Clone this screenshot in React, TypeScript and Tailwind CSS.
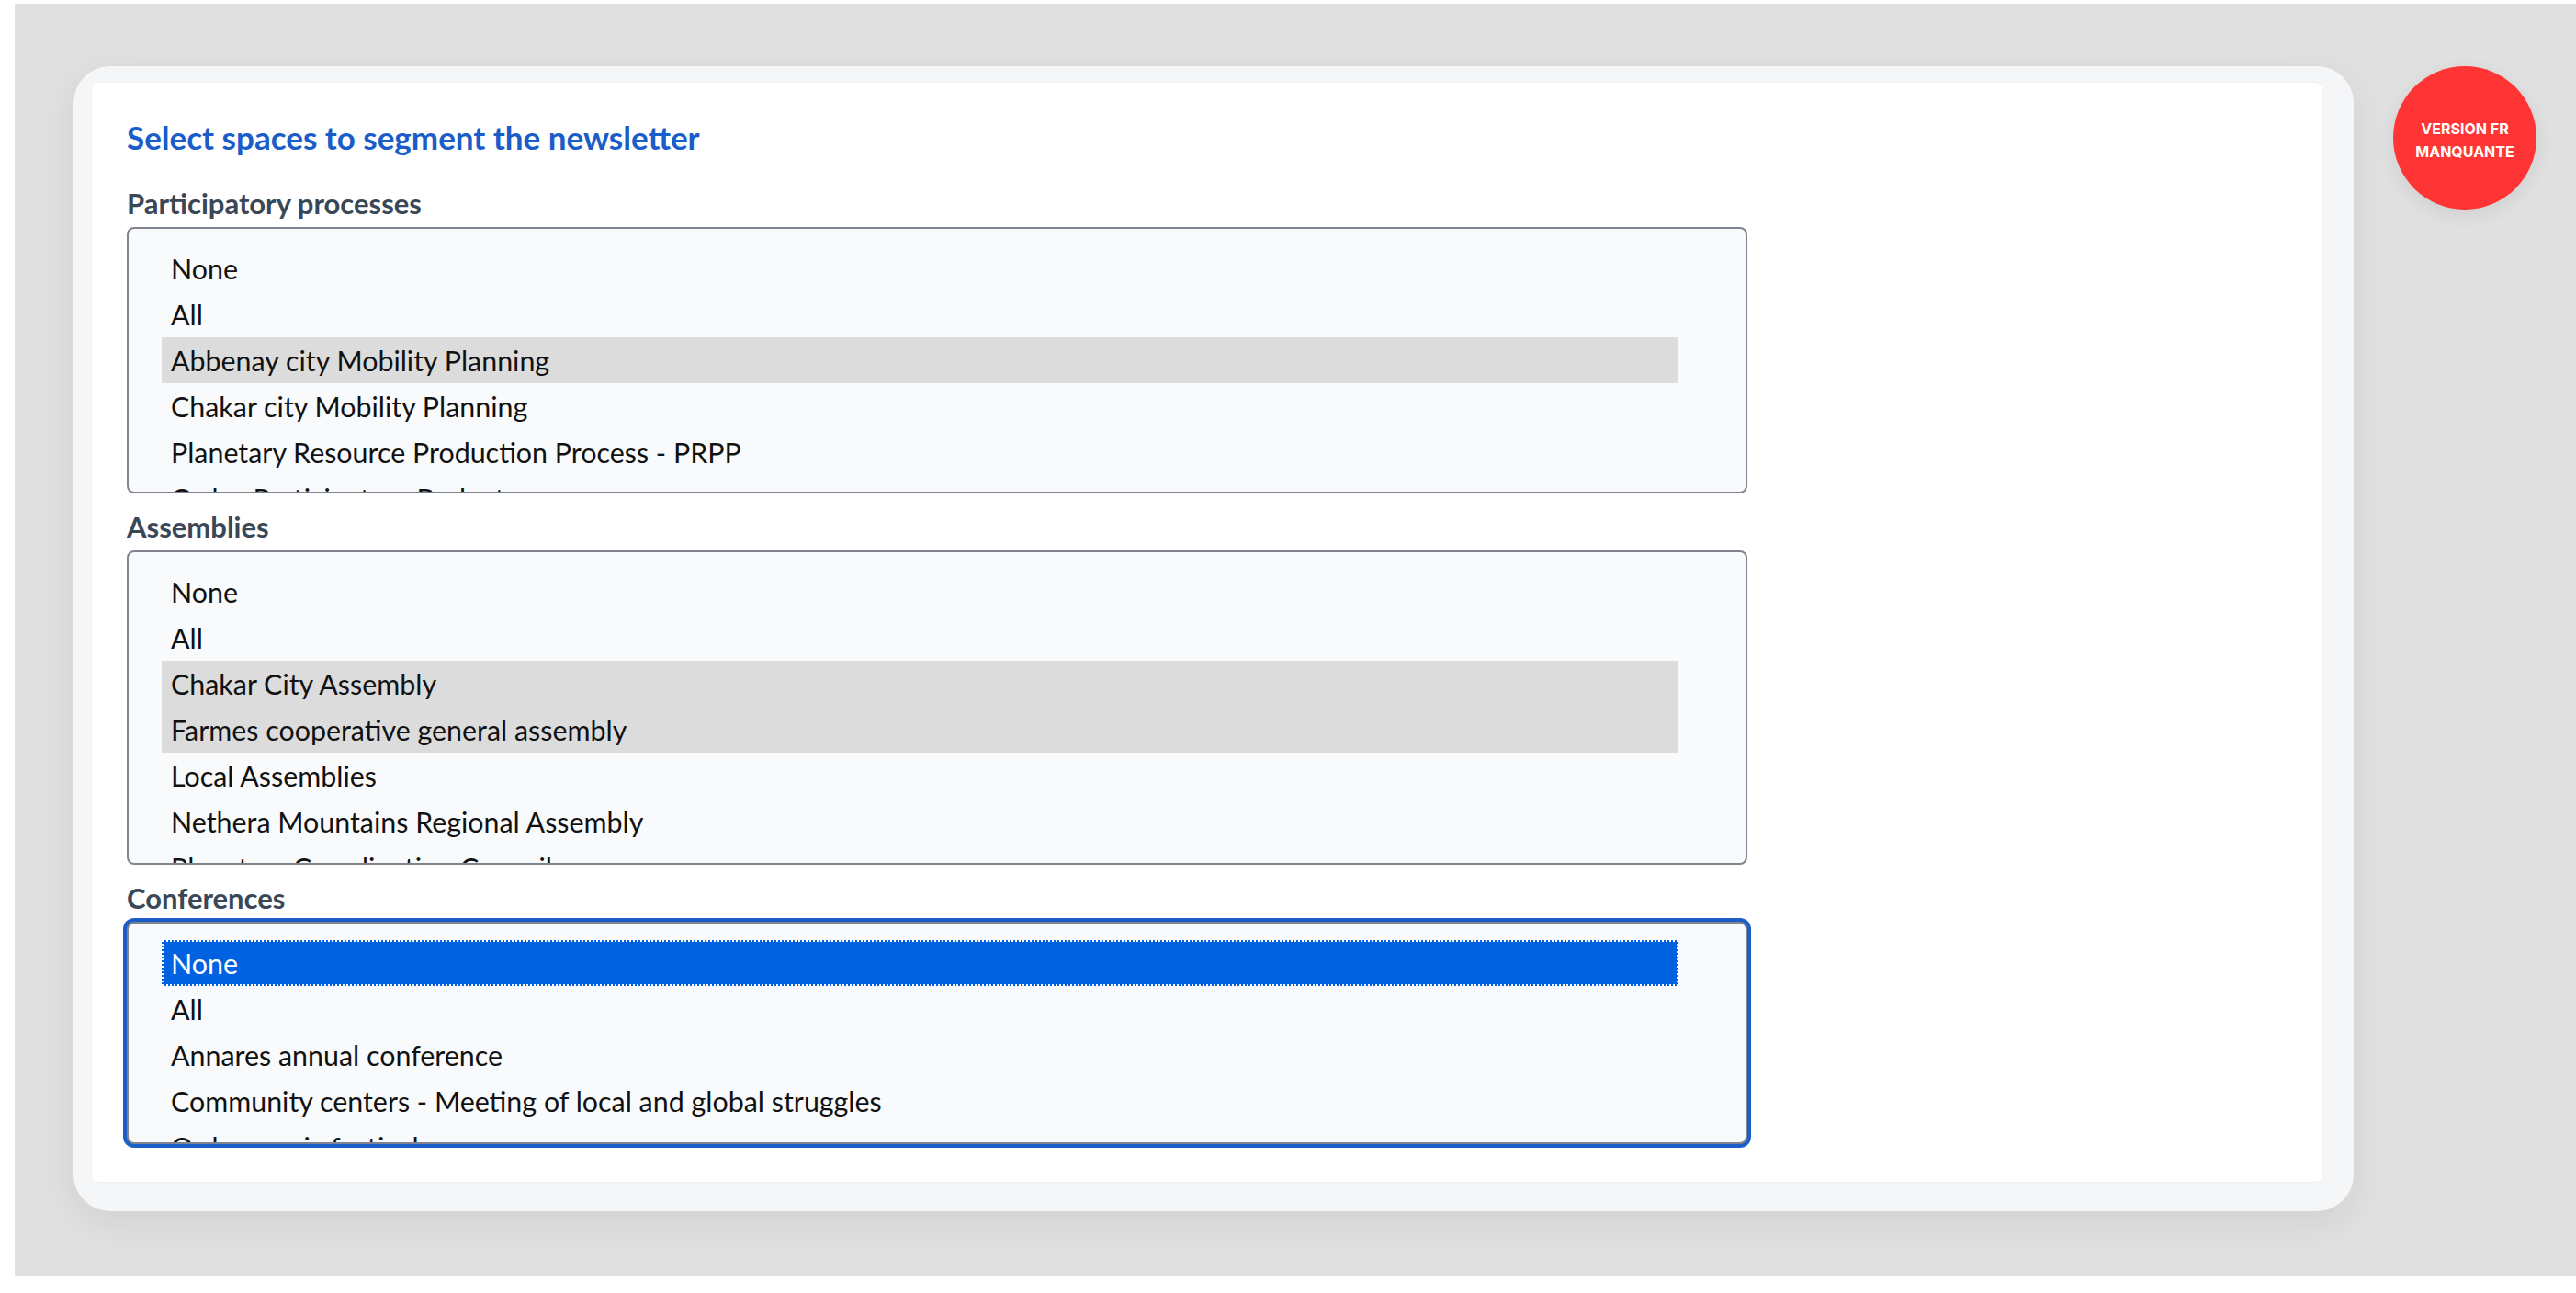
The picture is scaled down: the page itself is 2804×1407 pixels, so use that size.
import { memo } from 'react';

type ListBoxProps = {
  items: string[];
  selected: number[];
  heightClass: string;
  focused?: boolean;
};

const ListBox = ({ items, selected, heightClass, focused }: ListBoxProps) => (
  <div
    role="listbox"
    aria-multiselectable="true"
    className={`${heightClass} w-[1764px] overflow-hidden rounded-[8px] border-2 border-solid border-[#80848e] bg-[#f9fafb] pt-[18px] pr-[73px] pl-[36px] ${
      focused ? 'ring-4 ring-[#1c5ec8]' : ''
    }`}
  >
    {items.map((item, i) => {
      const isSelected = selected.includes(i);
      let tone = 'text-[#111111]';
      if (isSelected && focused) {
        tone = 'bg-[#0062e0] text-white outline-2 outline-dotted -outline-offset-2 outline-white';
      } else if (isSelected) {
        tone = 'bg-[#dcdcdc] text-[#111111]';
      }
      return (
        <div
          key={item}
          role="option"
          aria-selected={isSelected}
          className={`h-[50px] whitespace-nowrap pl-[10px] text-[30.4px] leading-[50px] ${tone}`}
        >
          {item}
        </div>
      );
    })}
  </div>
);

const Field = ({
  label,
  className,
  children,
}: {
  label: string;
  className: string;
  children: React.ReactNode;
}) => (
  <div className={className}>
    <label className="mb-[6px] block text-[31px] leading-[40px] font-bold text-[#3a4757]">
      {label}
    </label>
    {children}
  </div>
);

export const App = memo(() => {
  return (
    <div
      className="min-h-screen bg-white"
      style={{ fontFamily: 'Lato, "Noto Sans", "Liberation Sans", sans-serif' }}
    >
      <div className="mt-[4px] ml-[16px] flex h-[1384px] items-start bg-[#e0e0e0]">
        <section className="mt-[68px] ml-[64px] h-[1246px] w-[2482px] shrink-0 rounded-[40px] bg-[#f5f6f8] pt-[18px] pr-[35px] pb-[32px] pl-[20px] shadow-[0_12px_40px_rgba(0,0,0,0.07)]">
          <div className="h-full rounded-[6px] bg-white pt-[37px] pl-[38px] shadow-[0_0_0_1px_#eef0f3]">
            <h2 className="text-[35px] leading-[44px] font-bold text-[#1a5cc8]">
              Select spaces to segment the newsletter
            </h2>

            <Field label="Participatory processes" className="mt-[30px]">
              <ListBox
                heightClass="h-[290px]"
                selected={[2]}
                items={[
                  'None',
                  'All',
                  'Abbenay city Mobility Planning',
                  'Chakar city Mobility Planning',
                  'Planetary Resource Production Process - PRPP',
                  'Ordus Participatory Budget',
                ]}
              />
            </Field>

            <Field label="Assemblies" className="mt-[16px]">
              <ListBox
                heightClass="h-[342px]"
                selected={[2, 3]}
                items={[
                  'None',
                  'All',
                  'Chakar City Assembly',
                  'Farmes cooperative general assembly',
                  'Local Assemblies',
                  'Nethera Mountains Regional Assembly',
                  'Planetary Coordination Council',
                ]}
              />
            </Field>

            <Field label="Conferences" className="mt-[16px]">
              <ListBox
                heightClass="h-[242px]"
                selected={[0]}
                focused
                items={[
                  'None',
                  'All',
                  'Annares annual conference',
                  'Community centers - Meeting of local and global struggles',
                  'Ordus music festival',
                ]}
              />
            </Field>
          </div>
        </section>

        <div
          className="mt-[68px] ml-[43px] flex size-[156px] shrink-0 items-center justify-center rounded-full bg-[#ff3535] pt-[6px] text-center text-[16px] leading-[25px] font-bold text-white shadow-[0_6px_20px_rgba(0,0,0,0.08)]"
          style={{ fontFamily: 'Inter, "Liberation Sans", sans-serif' }}
        >
          VERSION FR
          <br />
          MANQUANTE
        </div>
      </div>
    </div>
  );
});

export default App;
